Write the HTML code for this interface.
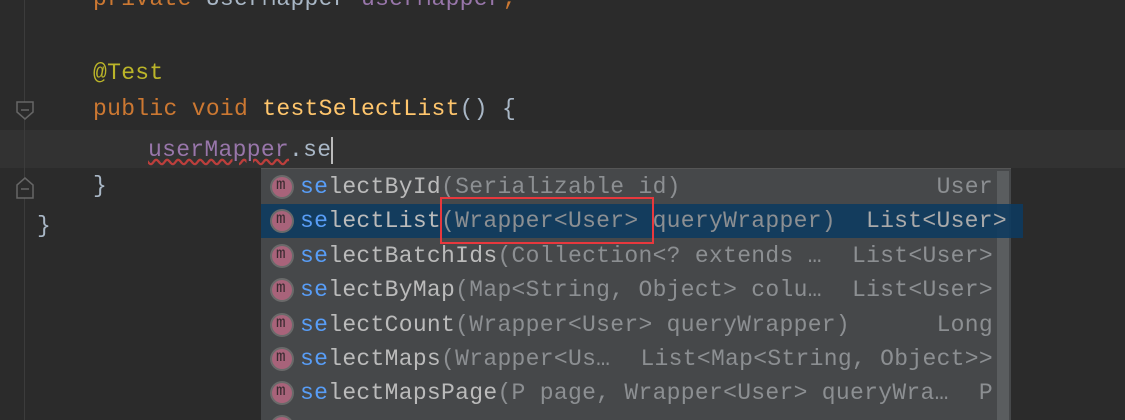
<!DOCTYPE html>
<html style="overflow:hidden;height:420px"><head><meta charset="utf-8"><style>
body{margin:0;width:1125px;height:420px;background:#2b2b2b;overflow:hidden;position:relative;font-family:"Liberation Mono",monospace;font-size:23px;letter-spacing:0.3px;}
.l{position:absolute;white-space:pre;line-height:38px;height:38px;}
.gut{position:absolute;left:24px;top:0;width:1px;height:420px;background:#3c3c3c;}
.cur{position:absolute;left:0;top:130px;width:1125px;height:38px;background:#323232;}
.pop{position:absolute;left:261px;top:168px;width:750px;height:252px;background:#46484a;border-top:1px solid #555;}
.row{position:absolute;left:0;width:750px;height:34px;line-height:34px;white-space:pre;color:#8c8f92;overflow:hidden;}
.sel{background:rgba(13,58,96,0.88);width:762px;}
.ic{position:absolute;left:11px;top:7px;width:20px;height:20px;border-radius:50%;background:#a8637a;box-shadow:0 0 0 2px #6a6a6a;}
.ic:after{content:"m";position:absolute;left:4px;top:-9px;font-size:16px;font-style:normal;color:#3a2a30;}
.n{position:absolute;left:39px;color:#bbbbbb;}
.n b{font-weight:normal;color:#589df6;}
.r{position:absolute;right:18px;}
.sb{position:absolute;left:736px;top:2px;width:12px;height:250px;background:#5a5d5f;}
</style></head><body>
<div class="cur"></div>
<div class="gut"></div>
<svg style="position:absolute;left:15px;top:100px" width="22" height="100"><path d="M2 2h16v10l-8 7-8-7z" fill="#2b2b2b" stroke="#666" stroke-width="1.5"/><path d="M6 10h8" stroke="#666" stroke-width="1.5"/><path d="M2 98h16v-13l-8-7-8 7z" fill="#2b2b2b" stroke="#666" stroke-width="1.5"/><path d="M6 89h8" stroke="#666" stroke-width="1.5"/></svg>
<div class="l" style="left:93px;top:-20px;color:#cc7832">private <span style="color:#a9b7c6">UserMapper</span> <span style="color:#9876aa">userMapper</span>;</div>
<div class="l" style="left:93px;top:54px;color:#bbb529">@Test</div>
<div class="l" style="left:93px;top:90px;color:#cc7832">public void <span style="color:#ffc66d">testSelectList</span><span style="color:#a9b7c6">() {</span></div>
<div class="l" style="left:148px;top:131px;color:#9876aa"><span style="text-decoration:underline wavy #bc3f3c">userMapper</span><span style="color:#a9b7c6">.se</span></div>
<div style="position:absolute;left:331px;top:137px;width:2px;height:27px;background:#bbb"></div>
<div class="l" style="left:93px;top:167px;color:#a9b7c6">}</div>
<div class="l" style="left:37px;top:207px;color:#a9b7c6">}</div>
<div class="pop">
<div class="sb"></div>
<div class="row" style="top:1px"><i class="ic"></i><span class="n"><b>se</b>lectById<span style="color:#8c8f92">(Serializable id)</span></span><span class="r">User</span></div>
<div class="row sel" style="top:35px"><i class="ic"></i><span class="n"><b>se</b>lectList<span style="color:#8c8f92">(Wrapper&lt;User&gt; queryWrapper)</span></span><span class="r" style="right:16px;color:#aaa">List&lt;User&gt;</span></div>
<div class="row" style="top:70px"><i class="ic"></i><span class="n"><b>se</b>lectBatchIds<span style="color:#8c8f92">(Collection&lt;? extends …</span></span><span class="r">List&lt;User&gt;</span></div>
<div class="row" style="top:104px"><i class="ic"></i><span class="n"><b>se</b>lectByMap<span style="color:#8c8f92">(Map&lt;String, Object&gt; colu…</span></span><span class="r">List&lt;User&gt;</span></div>
<div class="row" style="top:139px"><i class="ic"></i><span class="n"><b>se</b>lectCount<span style="color:#8c8f92">(Wrapper&lt;User&gt; queryWrapper)</span></span><span class="r">Long</span></div>
<div class="row" style="top:173px"><i class="ic"></i><span class="n"><b>se</b>lectMaps<span style="color:#8c8f92">(Wrapper&lt;Us…</span></span><span class="r">List&lt;Map&lt;String, Object&gt;&gt;</span></div>
<div class="row" style="top:207px"><i class="ic"></i><span class="n"><b>se</b>lectMapsPage<span style="color:#8c8f92">(P page, Wrapper&lt;User&gt; queryWra…</span></span><span class="r">P</span></div>
<div class="row" style="top:241px;height:11px"><i class="ic"></i></div>
</div>
<div style="position:absolute;left:440px;top:197px;width:210px;height:43px;border:2px solid #e8383d"></div>
</body></html>
